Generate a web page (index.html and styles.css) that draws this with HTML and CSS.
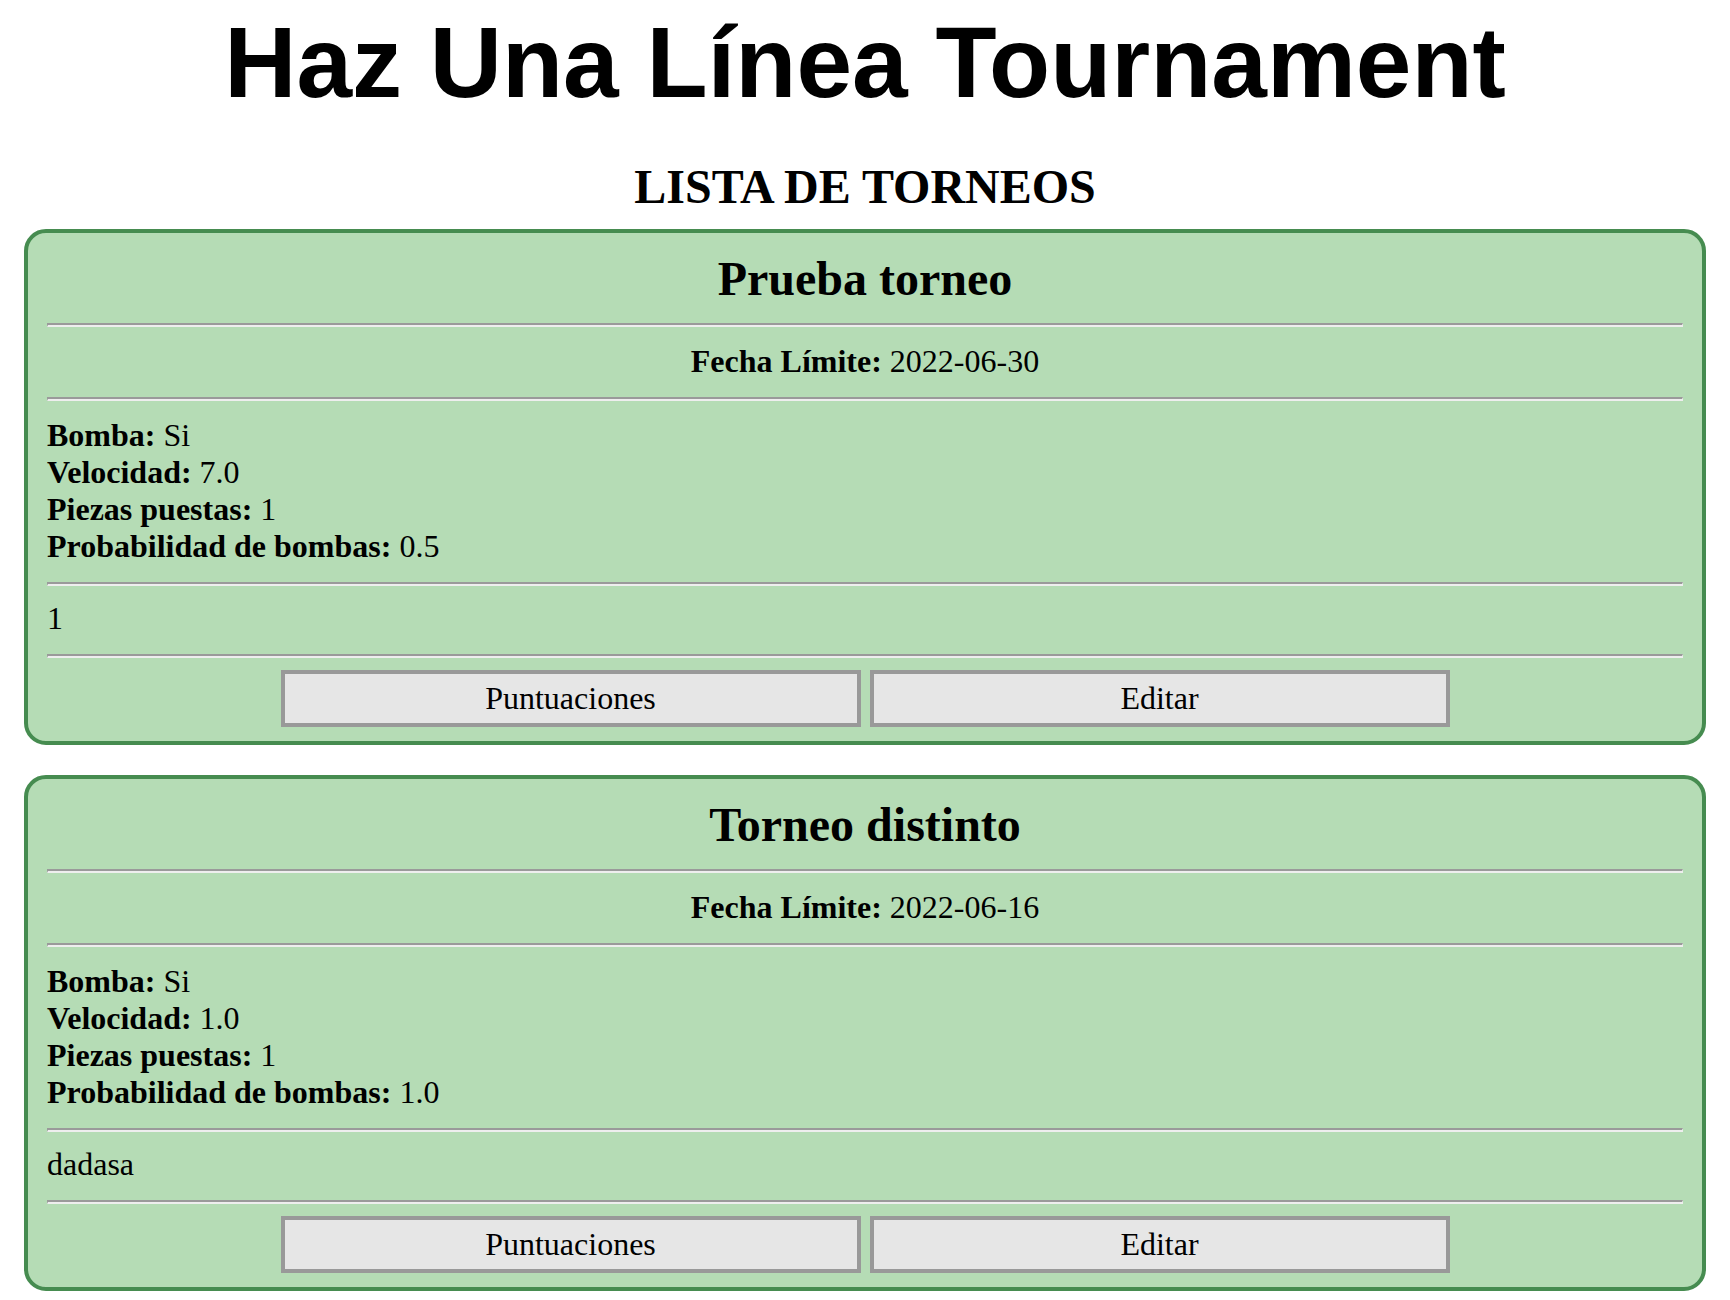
FILE: index.html
```html
<!DOCTYPE html>
<html lang="es">
<head>
<meta charset="utf-8">
<title>Haz Una Línea Tournament</title>
<link rel="stylesheet" href="styles.css">
</head>
<body>
<header class="site-header">
  <h1 class="site-title">Haz Una Línea Tournament</h1>
</header>
<main class="page">
  <h2 class="list-title">LISTA DE TORNEOS</h2>
  <div class="cards">
    <section class="card">
      <h3 class="card-title">Prueba torneo</h3>
      <hr class="sep">
      <p class="deadline"><b>Fecha Límite:</b> 2022-06-30</p>
      <hr class="sep">
      <div class="props">
        <b>Bomba:</b> Si<br>
        <b>Velocidad:</b> 7.0<br>
        <b>Piezas puestas:</b> 1<br>
        <b>Probabilidad de bombas:</b> 0.5
      </div>
      <hr class="sep">
      <p class="desc">1</p>
      <hr class="sep">
      <div class="actions">
        <button class="btn" type="button">Puntuaciones</button>
        <button class="btn" type="button">Editar</button>
      </div>
    </section>
    <section class="card">
      <h3 class="card-title">Torneo distinto</h3>
      <hr class="sep">
      <p class="deadline"><b>Fecha Límite:</b> 2022-06-16</p>
      <hr class="sep">
      <div class="props">
        <b>Bomba:</b> Si<br>
        <b>Velocidad:</b> 1.0<br>
        <b>Piezas puestas:</b> 1<br>
        <b>Probabilidad de bombas:</b> 1.0
      </div>
      <hr class="sep">
      <p class="desc">dadasa</p>
      <hr class="sep">
      <div class="actions">
        <button class="btn" type="button">Puntuaciones</button>
        <button class="btn" type="button">Editar</button>
      </div>
    </section>
  </div>
</main>
</body>
</html>
```
FILE: styles.css
```css
html, body {
  margin: 0;
  padding: 0;
  background: #ffffff;
}

body {
  font-family: "Liberation Serif", "Times New Roman", serif;
  font-size: 32px;
  color: #000000;
}

.site-header {
  padding-top: 5px;
}

.site-title {
  margin: 0;
  font-family: "Liberation Sans", Arial, sans-serif;
  font-size: 100px;
  font-weight: bold;
  text-align: center;
  line-height: normal;
}

.page {
  padding: 0 24px;
}

.list-title {
  margin: 39px 0 15px;
  font-size: 48px;
  font-weight: bold;
  text-align: center;
  line-height: normal;
}

.cards {
  display: flex;
  flex-direction: column;
  gap: 30px;
}

.card {
  background: #b5dcb5;
  border: 4px solid #468c50;
  border-radius: 22px;
  padding: 0 19px 14px;
}

.card-title {
  margin: 0;
  padding: 18px 0 17px;
  font-size: 48px;
  font-weight: bold;
  text-align: center;
  line-height: normal;
}

.sep {
  margin: 0;
  height: 0;
  border-style: solid;
  border-width: 2px 1px;
  border-color: #9a9a9a #eeeeee #eeeeee #9a9a9a;
}

.deadline {
  margin: 0;
  padding: 16px 0 17px;
  text-align: center;
}

.props {
  padding: 16px 0 17px;
}

.desc {
  margin: 0;
  padding: 14px 0 17px;
}

.actions {
  display: flex;
  justify-content: center;
  gap: 9px;
  padding-top: 12px;
}

.btn {
  width: 580px;
  margin: 0;
  padding: 6px 0;
  font-family: "Liberation Serif", "Times New Roman", serif;
  font-size: 32px;
  line-height: normal;
  color: #000000;
  background: #e6e6e6;
  border: 4px solid #999999;
  border-radius: 0;
}
```
